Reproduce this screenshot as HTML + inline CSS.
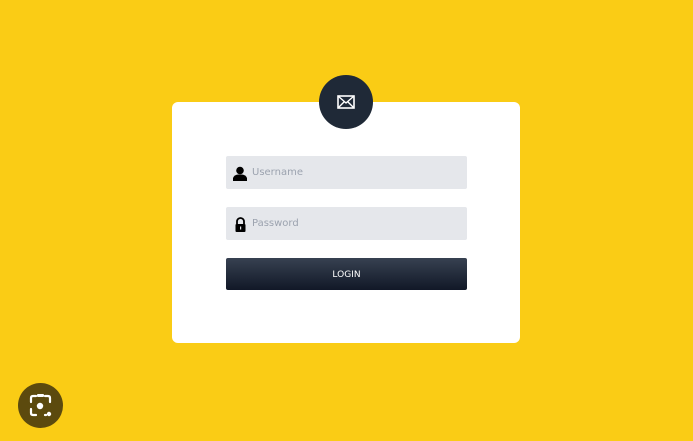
<!DOCTYPE html>
<html><head><meta charset="utf-8"><style>
html,body{margin:0;padding:0;width:693px;height:441px;overflow:hidden;background:#facc15;font-family:"DejaVu Sans","Liberation Sans",sans-serif;}
.card{position:absolute;left:172px;top:102px;width:348px;height:241px;background:#fff;border-radius:6px;}
.badge{position:absolute;left:319px;top:75px;width:54px;height:54px;border-radius:50%;background:#1f2937;}
.inp{position:absolute;left:226px;width:241px;height:33px;background:#e5e7eb;border-radius:2px;}
.inp span{position:absolute;left:26px;top:12px;font-size:10px;line-height:10px;color:#9ca3af;}
.inp svg{position:absolute;left:7px;top:10px;}
.btn{position:absolute;left:226px;top:258px;width:241px;height:32px;border-radius:2px;background:linear-gradient(#374151,#111827);color:#fff;font-size:9px;text-align:center;line-height:34px;}
.lens{position:absolute;left:18px;top:383px;width:45px;height:45px;border-radius:50%;background:#5c4a0e;}
</style></head><body>
<div class="card"></div>
<div class="badge"><svg width="54" height="54" viewBox="0 0 54 54"><rect x="19" y="21" width="16" height="12" fill="none" stroke="#fff" stroke-width="1.6"/><path d="M19 21 L27 28 L35 21 M19 33 L25 27 M35 33 L29 27" fill="none" stroke="#fff" stroke-width="1.4"/></svg></div>
<div class="inp" style="top:156px"><svg width="14" height="15" viewBox="0 0 14 15"><circle cx="7" cy="4.5" r="3.8" fill="#000"/><path d="M0 15 L0 12 Q1 9 5 8.5 L9 8.5 Q13 9 14 12 L14 15 Z" fill="#000"/></svg><span>Username</span></div>
<div class="inp" style="top:207px"><svg width="14" height="15" viewBox="0 0 14 15" style="left:8px"><path d="M3 7 V4.5 A3.5 3.5 0 0 1 10 4.5 V7" fill="none" stroke="#000" stroke-width="1.8"/><rect x="1.5" y="7" width="10" height="8" rx="1" fill="#000"/><rect x="6" y="9.5" width="1.2" height="3" fill="#e5e7eb"/></svg><span>Password</span></div>
<div class="btn">LOGIN</div>
<div class="lens"><svg width="45" height="45" viewBox="0 0 45 45"><path d="M13 19 V15 Q13 13 15 13 H18 M27 13 H30 Q32 13 32 15 V19 M13 26 V30 Q13 32 15 32 H18 M27 32 H28" fill="none" stroke="#fff" stroke-width="2.2" stroke-linecap="round"/><rect x="19" y="11" width="7" height="3" rx="1" fill="#fff"/><circle cx="22" cy="23" r="3.2" fill="#fff"/><circle cx="31" cy="31" r="2.2" fill="#fff"/></svg></div>
</body></html>
